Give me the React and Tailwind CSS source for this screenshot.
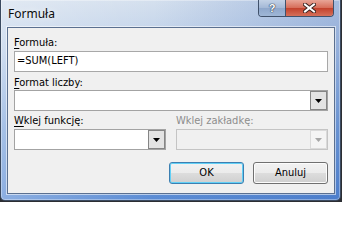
import React from 'react'

// Windows 7 style "Formuła" dialog (Word field formula)
const dialogFont = "font-['DejaVu_Sans_Condensed','DejaVu_Sans',sans-serif]"

function ComboArrow({ disabled }) {
  return (
    <svg width="7" height="4" viewBox="0 0 7 4">
      <polygon points="0,0 7,0 3.5,4" fill={disabled ? '#a6a6a6' : '#000'} />
    </svg>
  )
}

function ComboBox({ disabled = false }) {
  return (
    <div
      className={`h-[21px] flex border ${
        disabled ? 'border-[#c4c4c4] bg-[#f0f0f0]' : 'border-[#a3a3a3] bg-white'
      }`}
    >
      <div className="flex-1" />
      <div
        className={`w-[17px] flex items-center justify-center border ${
          disabled ? 'border-[#dadada] bg-[#f4f4f4]' : 'border-[#858585] bg-[#e3e3e3]'
        }`}
      >
        <ComboArrow disabled={disabled} />
      </div>
    </div>
  )
}

function Label({ children, hotkey, disabled = false }) {
  return (
    <div className={`h-[13px] leading-[13px] text-[11px] ${disabled ? 'text-[#8d8d8d]' : 'text-black'}`}>
      {hotkey && <span className="underline underline-offset-[2px]">{hotkey}</span>}
      {children}
    </div>
  )
}

function DialogButton({ children, isDefault = false }) {
  return (
    <button
      className={`w-[75px] h-[22px] rounded-[3px] border text-[11px] text-black bg-[linear-gradient(#f2f2f2_0%,#ebebeb_50%,#dddddd_50%,#cfcfcf_100%)] ${
        isDefault
          ? 'border-[#3c7fb1] shadow-[inset_0_0_0_1px_#62d0f6]'
          : 'border-[#707070] shadow-[inset_0_0_0_1px_#fcfcfc]'
      }`}
    >
      {children}
    </button>
  )
}

function CaptionButtons() {
  return (
    <div className="flex h-[17px] mr-[6px] border border-t-0 border-[#40516b] rounded-b-[4px] overflow-hidden">
      <div className="w-[27px] flex items-center justify-center border-r border-[#40516b] bg-[linear-gradient(#c3d2e6,#a3b8d6_50%,#8ea7cb_50%,#9fb6d6)]">
        <span className="font-['Liberation_Sans',sans-serif] font-bold text-[11px] leading-none text-white [text-shadow:0_0_1px_#2c3a52,0_0_1px_#2c3a52,0_0_1px_#2c3a52]">
          ?
        </span>
      </div>
      <div className="w-[47px] flex items-center justify-center bg-[linear-gradient(#e8a597,#d66c58_50%,#c2402b_50%,#d5705a)]">
        <svg width="13" height="10" viewBox="0 0 13 10">
          <path d="M2 1.5 L11 8.5 M11 1.5 L2 8.5" stroke="#3b2320" strokeWidth="4" strokeLinecap="square" />
          <path d="M2 1.5 L11 8.5 M11 1.5 L2 8.5" stroke="#ffffff" strokeWidth="2" strokeLinecap="square" />
        </svg>
      </div>
    </div>
  )
}

export default function App() {
  return (
    <div className="w-[342px] h-[202px] bg-[#2c2e33] overflow-hidden">
      <div className="w-[341px] h-[201px] flex flex-col border border-t-0 border-[#3b4a60] rounded-b-[5px] shadow-[inset_0_0_0_1px_rgba(255,255,255,0.35)] bg-[linear-gradient(to_right,rgba(255,255,255,0.3)_0%,rgba(255,255,255,0)_45%,rgba(40,90,180,0.28)_100%),linear-gradient(to_bottom,#d5e0ee_0%,#bccfe9_25%,#7fa6dc_65%,#5a8bd4_100%)]">
        {/* title bar */}
        <div className="h-[27px] shrink-0 flex justify-between items-start">
          <div className="pl-[7px] h-[27px] flex items-center font-['Noto_Sans',sans-serif] text-[12px] text-[#0b0b0b] [text-shadow:0_0_6px_rgba(255,255,255,0.9)]">
            Formuła
          </div>
          <CaptionButtons />
        </div>

        {/* client area */}
        <div
          className={`ml-[6px] mr-[5px] mb-[6px] flex-1 flex flex-col bg-[#f0f0f0] border border-[#5b7090] shadow-[0_0_0_1px_rgba(255,255,255,0.55)] pt-[8px] px-[6px] ${dialogFont}`}
        >
          <Label hotkey="F">ormuła:</Label>
          <div className="mt-[2px] h-[21px] flex items-center border border-[#a8a8a8] bg-white pl-[2px] text-[11px] text-black">
            =SUM(LEFT)
          </div>

          <div className="mt-[4px]">
            <Label hotkey="F">ormat liczby:</Label>
          </div>
          <div className="mt-[1px]">
            <ComboBox />
          </div>

          <div className="mt-[3px] grid grid-cols-2 gap-[10px]">
            <div className="flex flex-col gap-[2px]">
              <Label hotkey="W">klej funkcję:</Label>
              <ComboBox />
            </div>
            <div className="flex flex-col gap-[2px]">
              <Label disabled>Wklej zakładkę:</Label>
              <ComboBox disabled />
            </div>
          </div>

          <div className="mt-[12px] flex justify-end gap-[9px]">
            <DialogButton isDefault>OK</DialogButton>
            <DialogButton>Anuluj</DialogButton>
          </div>
        </div>
      </div>
    </div>
  )
}
